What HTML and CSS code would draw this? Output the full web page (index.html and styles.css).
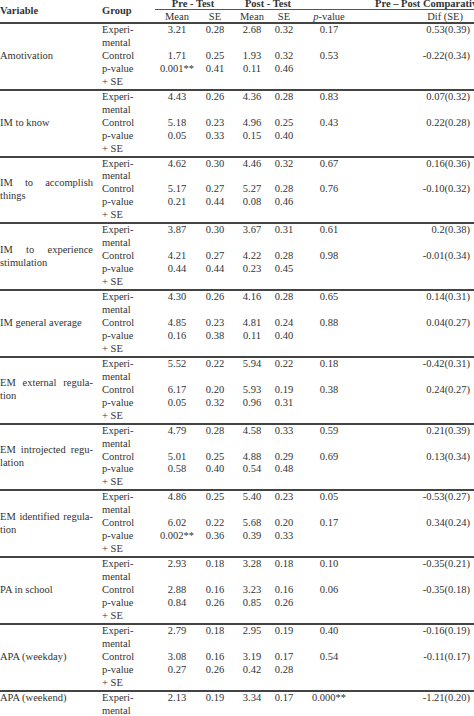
FILE: index.html
```html
<!DOCTYPE html>
<html lang="en">
<head>
<meta charset="utf-8">
<title>Pre/Post test comparison</title>
<link rel="stylesheet" href="styles.css">
</head>
<body>
<div class="table">
  <div class="head">
    <div class="h-var">Variable</div>
    <div class="h-grp">Group</div>
    <div class="h-span h-pre">Pre - Test</div>
    <div class="h-span h-post">Post - Test</div>
    <div class="h-span h-cmp">Pre – Post Comparative</div>
    <div class="h-sub">Mean</div>
    <div class="h-sub">SE</div>
    <div class="h-sub">Mean</div>
    <div class="h-sub">SE</div>
    <div class="h-sub"><i>p</i>-value</div>
    <div class="h-sub h-dif">Dif (SE)</div>
  </div>

  <div class="block">
    <div class="var">Amotivation</div>
    <div class="grp">Experi&shy;mental</div><div class="num">3.21</div><div class="num">0.28</div><div class="num">2.68</div><div class="num">0.32</div><div class="num">0.17</div><div class="dif">0.53(0.39)</div>
    <div class="grp">Control</div><div class="num">1.71</div><div class="num">0.25</div><div class="num">1.93</div><div class="num">0.32</div><div class="num">0.53</div><div class="dif">-0.22(0.34)</div>
    <div class="grp">p-value + SE</div><div class="num">0.001**</div><div class="num">0.41</div><div class="num">0.11</div><div class="num">0.46</div>
  </div>

  <div class="block">
    <div class="var">IM to know</div>
    <div class="grp">Experi&shy;mental</div><div class="num">4.43</div><div class="num">0.26</div><div class="num">4.36</div><div class="num">0.28</div><div class="num">0.83</div><div class="dif">0.07(0.32)</div>
    <div class="grp">Control</div><div class="num">5.18</div><div class="num">0.23</div><div class="num">4.96</div><div class="num">0.25</div><div class="num">0.43</div><div class="dif">0.22(0.28)</div>
    <div class="grp">p-value + SE</div><div class="num">0.05</div><div class="num">0.33</div><div class="num">0.15</div><div class="num">0.40</div>
  </div>

  <div class="block">
    <div class="var">IM to accomplish things</div>
    <div class="grp">Experi&shy;mental</div><div class="num">4.62</div><div class="num">0.30</div><div class="num">4.46</div><div class="num">0.32</div><div class="num">0.67</div><div class="dif">0.16(0.36)</div>
    <div class="grp">Control</div><div class="num">5.17</div><div class="num">0.27</div><div class="num">5.27</div><div class="num">0.28</div><div class="num">0.76</div><div class="dif">-0.10(0.32)</div>
    <div class="grp">p-value + SE</div><div class="num">0.21</div><div class="num">0.44</div><div class="num">0.08</div><div class="num">0.46</div>
  </div>

  <div class="block">
    <div class="var">IM to experience stimulation</div>
    <div class="grp">Experi&shy;mental</div><div class="num">3.87</div><div class="num">0.30</div><div class="num">3.67</div><div class="num">0.31</div><div class="num">0.61</div><div class="dif">0.2(0.38)</div>
    <div class="grp">Control</div><div class="num">4.21</div><div class="num">0.27</div><div class="num">4.22</div><div class="num">0.28</div><div class="num">0.98</div><div class="dif">-0.01(0.34)</div>
    <div class="grp">p-value + SE</div><div class="num">0.44</div><div class="num">0.44</div><div class="num">0.23</div><div class="num">0.45</div>
  </div>

  <div class="block">
    <div class="var">IM general average</div>
    <div class="grp">Experi&shy;mental</div><div class="num">4.30</div><div class="num">0.26</div><div class="num">4.16</div><div class="num">0.28</div><div class="num">0.65</div><div class="dif">0.14(0.31)</div>
    <div class="grp">Control</div><div class="num">4.85</div><div class="num">0.23</div><div class="num">4.81</div><div class="num">0.24</div><div class="num">0.88</div><div class="dif">0.04(0.27)</div>
    <div class="grp">p-value + SE</div><div class="num">0.16</div><div class="num">0.38</div><div class="num">0.11</div><div class="num">0.40</div>
  </div>

  <div class="block">
    <div class="var">EM external regu&shy;la&shy;tion</div>
    <div class="grp">Experi&shy;mental</div><div class="num">5.52</div><div class="num">0.22</div><div class="num">5.94</div><div class="num">0.22</div><div class="num">0.18</div><div class="dif">-0.42(0.31)</div>
    <div class="grp">Control</div><div class="num">6.17</div><div class="num">0.20</div><div class="num">5.93</div><div class="num">0.19</div><div class="num">0.38</div><div class="dif">0.24(0.27)</div>
    <div class="grp">p-value + SE</div><div class="num">0.05</div><div class="num">0.32</div><div class="num">0.96</div><div class="num">0.31</div>
  </div>

  <div class="block">
    <div class="var">EM introjected regu&shy;la&shy;tion</div>
    <div class="grp">Experi&shy;mental</div><div class="num">4.79</div><div class="num">0.28</div><div class="num">4.58</div><div class="num">0.33</div><div class="num">0.59</div><div class="dif">0.21(0.39)</div>
    <div class="grp">Control</div><div class="num">5.01</div><div class="num">0.25</div><div class="num">4.88</div><div class="num">0.29</div><div class="num">0.69</div><div class="dif">0.13(0.34)</div>
    <div class="grp">p-value + SE</div><div class="num">0.58</div><div class="num">0.40</div><div class="num">0.54</div><div class="num">0.48</div>
  </div>

  <div class="block">
    <div class="var">EM identified regu&shy;la&shy;tion</div>
    <div class="grp">Experi&shy;mental</div><div class="num">4.86</div><div class="num">0.25</div><div class="num">5.40</div><div class="num">0.23</div><div class="num">0.05</div><div class="dif">-0.53(0.27)</div>
    <div class="grp">Control</div><div class="num">6.02</div><div class="num">0.22</div><div class="num">5.68</div><div class="num">0.20</div><div class="num">0.17</div><div class="dif">0.34(0.24)</div>
    <div class="grp">p-value + SE</div><div class="num">0.002**</div><div class="num">0.36</div><div class="num">0.39</div><div class="num">0.33</div>
  </div>

  <div class="block">
    <div class="var">PA in school</div>
    <div class="grp">Experi&shy;mental</div><div class="num">2.93</div><div class="num">0.18</div><div class="num">3.28</div><div class="num">0.18</div><div class="num">0.10</div><div class="dif">-0.35(0.21)</div>
    <div class="grp">Control</div><div class="num">2.88</div><div class="num">0.16</div><div class="num">3.23</div><div class="num">0.16</div><div class="num">0.06</div><div class="dif">-0.35(0.18)</div>
    <div class="grp">p-value + SE</div><div class="num">0.84</div><div class="num">0.26</div><div class="num">0.85</div><div class="num">0.26</div>
  </div>

  <div class="block">
    <div class="var">APA (weekday)</div>
    <div class="grp">Experi&shy;mental</div><div class="num">2.79</div><div class="num">0.18</div><div class="num">2.95</div><div class="num">0.19</div><div class="num">0.40</div><div class="dif">-0.16(0.19)</div>
    <div class="grp">Control</div><div class="num">3.08</div><div class="num">0.16</div><div class="num">3.19</div><div class="num">0.17</div><div class="num">0.54</div><div class="dif">-0.11(0.17)</div>
    <div class="grp">p-value + SE</div><div class="num">0.27</div><div class="num">0.26</div><div class="num">0.42</div><div class="num">0.28</div>
  </div>

  <div class="block block-last">
    <div class="var">APA (weekend)</div>
    <div class="grp">Experi&shy;mental</div><div class="num">2.13</div><div class="num">0.19</div><div class="num">3.34</div><div class="num">0.17</div><div class="num">0.000**</div><div class="dif">-1.21(0.20)</div>
  </div>
</div>
</body>
</html>
```

FILE: styles.css
```css
html, body {
  margin: 0;
  padding: 0;
  background: #ffffff;
  overflow: hidden;
}

body {
  width: 474px;
  font-family: "Liberation Serif", "Times New Roman", serif;
  font-size: 10.5px;
  color: #333333;
}

.table {
  margin-top: -2px;
}

.head,
.block {
  display: grid;
  grid-template-columns: 102px 53px 44px 32px 42px 22px 68px 1fr;
}

.head {
  line-height: 11px;
  border-bottom: 2px solid #444444;
}

.h-var,
.h-grp {
  grid-row: 1 / 3;
  align-self: center;
  font-weight: bold;
}

.h-var { grid-column: 1; }
.h-grp { grid-column: 2; }

.h-span {
  grid-row: 1;
  font-weight: bold;
  white-space: nowrap;
  border-bottom: 1px solid #555555;
}

.h-pre {
  grid-column: 3 / 5;
  text-align: center;
}

.h-post {
  grid-column: 5 / 7;
  text-align: center;
  padding-left: 10px;
}

.h-cmp {
  grid-column: 7 / 9;
  padding-left: 80px;
}

.h-sub {
  grid-row: 2;
  padding-top: 1px;
  text-align: center;
}

.h-dif {
  text-align: right;
  padding-right: 11px;
}

.block {
  line-height: 12.95px;
}

.block + .block {
  border-top: 2px solid #444444;
}

.var {
  grid-column: 1;
  grid-row: 1 / 4;
  align-self: center;
  text-align: justify;
  hyphens: manual;
  padding-right: 9px;
}

.block-last .var {
  grid-row: 1;
  align-self: start;
}

.grp {
  grid-column: 2;
  padding-right: 16px;
  hyphens: manual;
}

.num {
  text-align: center;
  white-space: nowrap;
}

.dif {
  text-align: right;
  padding-right: 4px;
  white-space: nowrap;
}
```
